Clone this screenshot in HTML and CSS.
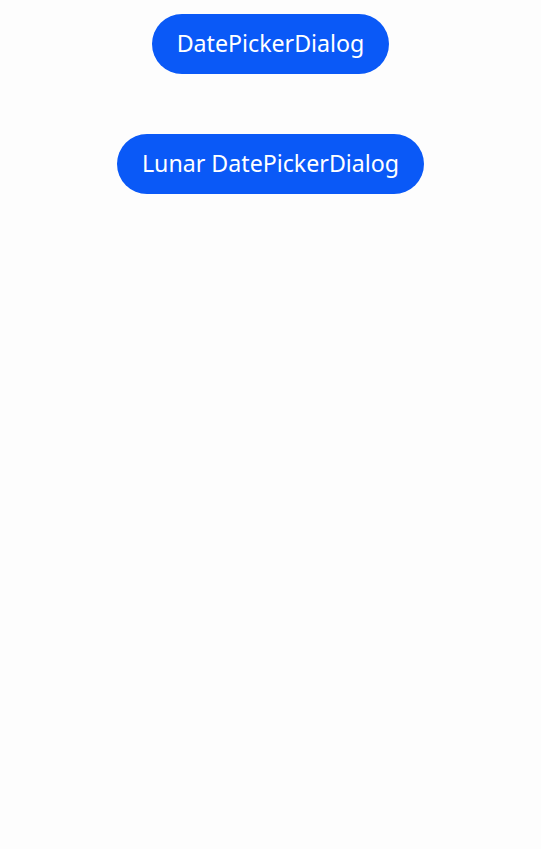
FILE: index.html
```html
<!DOCTYPE html>
<html>
<head>
<meta charset="utf-8">
<link rel="stylesheet" href="styles.css">
</head>
<body>
<div class="page">
  <button class="btn">DatePickerDialog</button>
  <button class="btn">Lunar DatePickerDialog</button>
</div>
</body>
</html>
```
FILE: styles.css
```css
html, body {
  margin: 0;
  padding: 0;
  background: #fdfdfd;
}
.page {
  display: flex;
  flex-direction: column;
  align-items: center;
  gap: 60px;
  padding-top: 14px;
  height: 849px;
  box-sizing: border-box;
}
.btn {
  height: 60px;
  padding: 0 25px;
  border: none;
  border-radius: 30px;
  background: #0a59f7;
  color: #ffffff;
  font-family: "Noto Sans", sans-serif;
  font-size: 23.2px;
  font-weight: 400;
  line-height: 1;
}
```
